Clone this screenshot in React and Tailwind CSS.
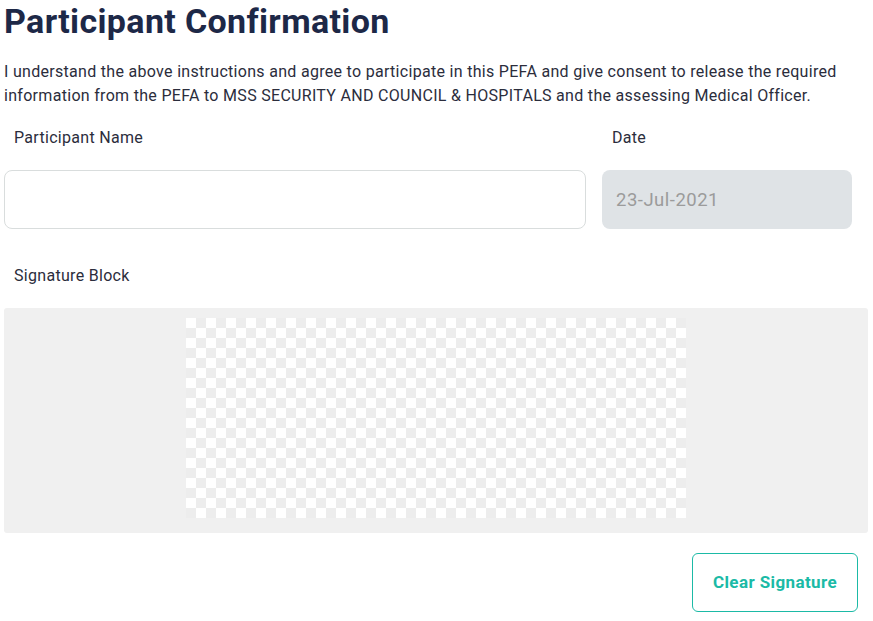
import React, { useState } from "react";

const App = () => {
  const [name, setName] = useState("");

  return (
    <div className="w-[873px] h-[621px] bg-white font-['Roboto',sans-serif] overflow-hidden">
      {/* Header */}
      <h1 className="pl-1 pt-[1px] text-[34px] leading-[40px] font-bold text-[#1d2847] tracking-[0.35px]">
        Participant Confirmation
      </h1>
      <p className="mt-[19px] pl-1 pr-4 text-[16px] leading-[24px] text-[#2b2d3c] tracking-[0.3px]">
        I understand the above instructions and agree to participate in this PEFA and give consent to release the required information from the PEFA to MSS SECURITY AND COUNCIL &amp; HOSPITALS and the assessing Medical Officer.
      </p>

      {/* Name + date */}
      <div className="mt-[18px] flex gap-4 pl-1">
        <div className="w-[582px]">
          <label className="block pl-[10px] text-[16px] leading-[24px] text-[#2b2d3c] tracking-[0.3px]">Participant Name</label>
          <input
            value={name}
            onChange={(e) => setName(e.target.value)}
            className="mt-[20px] w-full h-[59px] rounded-lg border border-[#d9dddd] px-3 text-[18px] outline-none"
          />
        </div>
        <div className="w-[250px]">
          <label className="block pl-[10px] text-[16px] leading-[24px] text-[#2b2d3c] tracking-[0.3px]">Date</label>
          <input
            value="23-Jul-2021"
            disabled
            readOnly
            className="mt-[20px] w-full h-[59px] rounded-lg bg-[#dfe3e6] px-[14px] text-[18.5px] tracking-[0.5px] text-[#9b9b9b] outline-none"
          />
        </div>
      </div>

      {/* Signature */}
      <div className="mt-[35px] pl-1">
        <label className="block pl-[10px] text-[16px] leading-[24px] text-[#2b2d3c] tracking-[0.3px]">Signature Block</label>
        <div className="mt-[20px] w-[864px] h-[225px] rounded-[3px] bg-[#f0f0f0] flex justify-center pt-[10px]">
          <div className="w-[500px] h-[200px] bg-[conic-gradient(#ededed_90deg,#ffffff_90deg_180deg,#ededed_180deg_270deg,#ffffff_270deg)] bg-size-[20px_20px]" />
        </div>
      </div>

      <div className="mt-[20px] flex justify-end pr-[15px]">
        <button className="w-[166px] h-[59px] rounded-md border border-[#1bbaa6] text-[17px] tracking-[0.4px] font-bold text-[#1bbaa6] bg-white">
          Clear Signature
        </button>
      </div>
    </div>
  );
};

export default App;
